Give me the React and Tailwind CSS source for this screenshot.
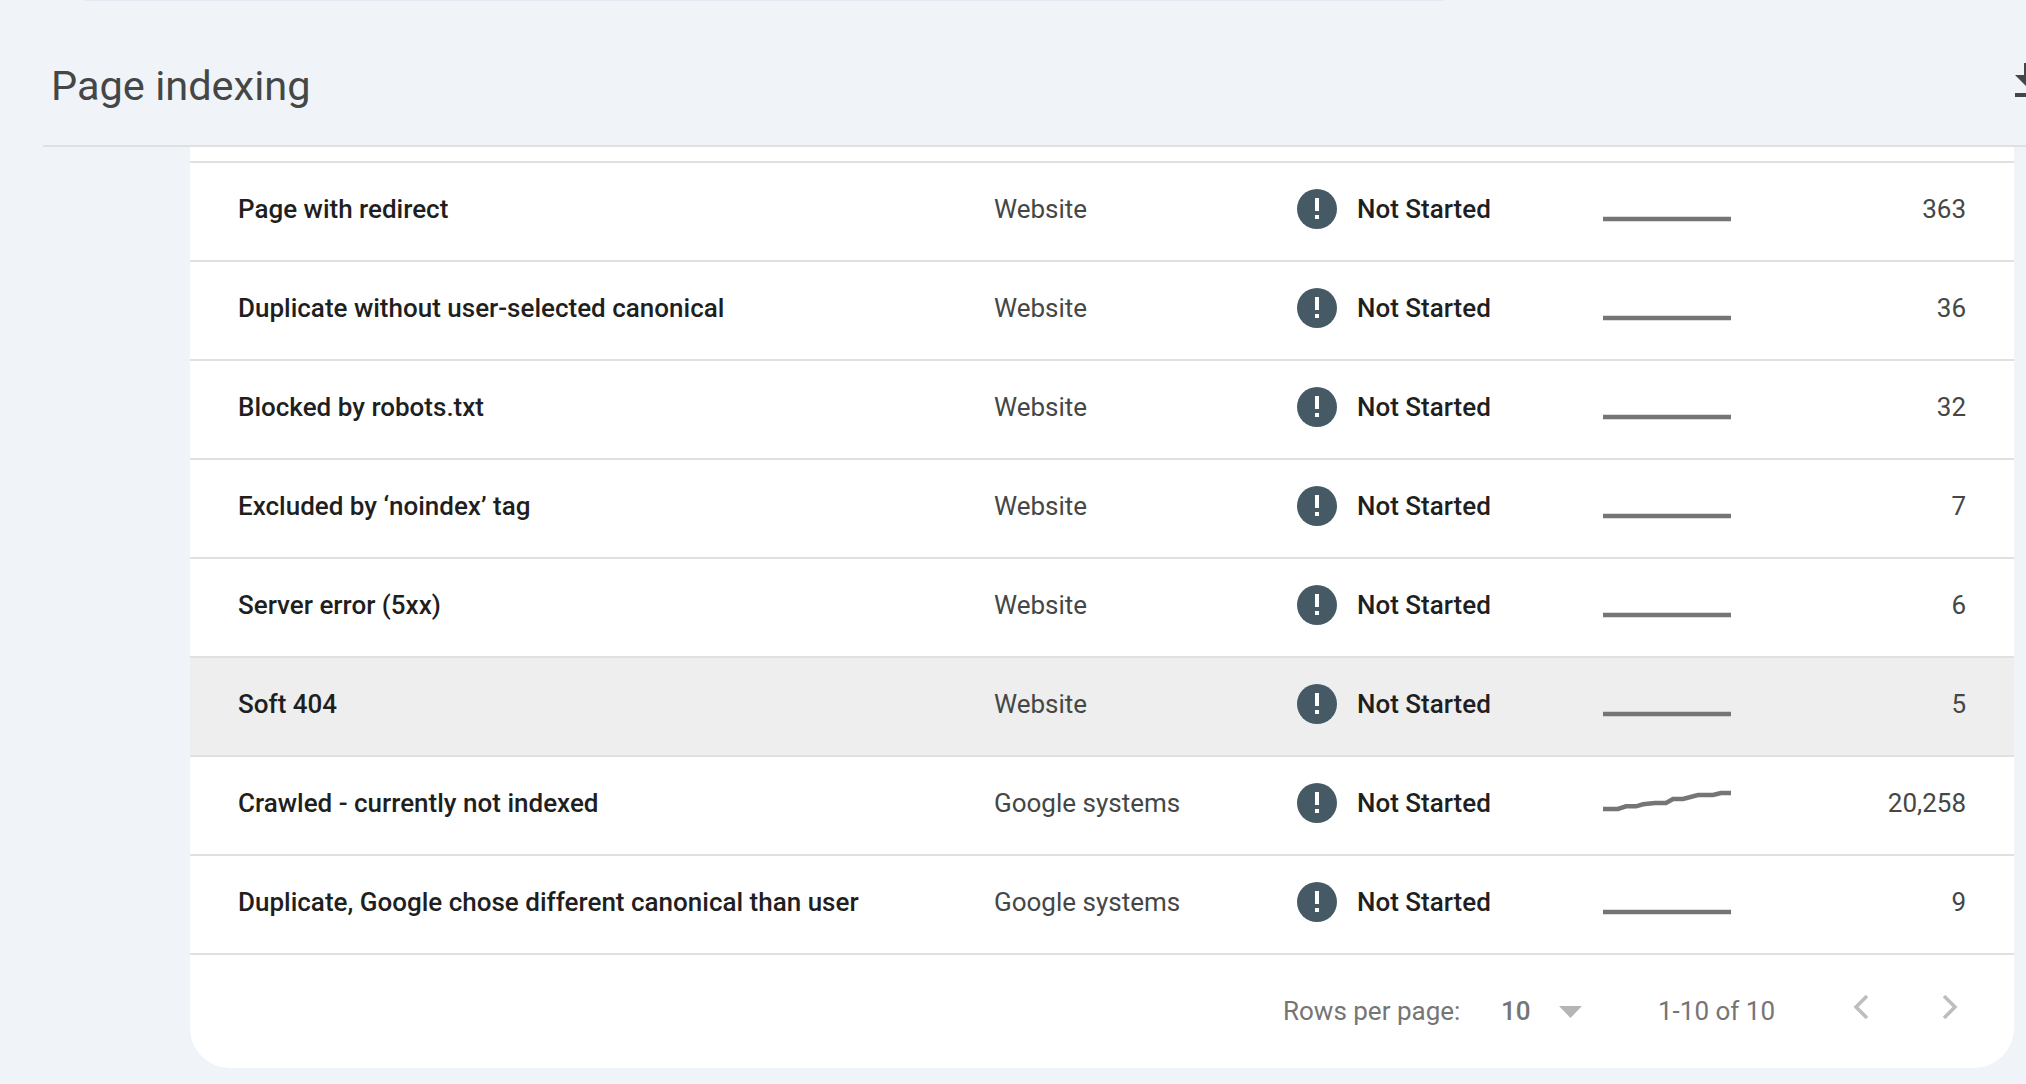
const rows = [
  { name: "Page with redirect", source: "Website", count: "363" },
  { name: "Duplicate without user-selected canonical", source: "Website", count: "36" },
  { name: "Blocked by robots.txt", source: "Website", count: "32" },
  { name: "Excluded by ‘noindex’ tag", source: "Website", count: "7" },
  { name: "Server error (5xx)", source: "Website", count: "6" },
  { name: "Soft 404", source: "Website", count: "5", hovered: true },
  { name: "Crawled - currently not indexed", source: "Google systems", count: "20,258", trend: true },
  { name: "Duplicate, Google chose different canonical than user", source: "Google systems", count: "9" },
];

function ErrorIcon() {
  return (
    <svg width="40" height="40" viewBox="0 0 40 40" className="shrink-0">
      <circle cx="20" cy="20" r="20" fill="#455a64" />
      <rect x="18" y="9" width="4" height="13" fill="#fff" />
      <rect x="18" y="26" width="4" height="4" fill="#fff" />
    </svg>
  );
}

function Spark({ trend }) {
  const points = trend
    ? "0,26 15,26 23,23.3 33,23.3 40,21.3 52,20 63,20 70,16 80,16 95,12 110,12 118,10 128,10"
    : "0,30 128,30";
  return (
    <svg width="128" height="40" viewBox="0 0 128 40" className="shrink-0">
      <polyline points={points} fill="none" stroke="#757575" strokeWidth="4.5" />
    </svg>
  );
}

function Row({ row }) {
  return (
    <div
      className={`flex h-[99px] items-center border-b-2 border-[#e0e0e0] pb-[5px] pl-12 pr-[48px] text-[26px] text-[#1f1f1f] ${
        row.hovered ? "bg-[#eeeeee]" : ""
      }`}
    >
      <div className="w-[756px] shrink-0 font-medium">{row.name}</div>
      <div className="w-[303px] shrink-0 text-[#444746]">{row.source}</div>
      <div className="flex w-[306px] shrink-0 items-center gap-[20px]">
        <ErrorIcon />
        <span className="font-medium">Not Started</span>
      </div>
      <Spark trend={row.trend} />
      <div className="flex-1 text-right text-[#444746]">{row.count}</div>
    </div>
  );
}

export default function App() {
  return (
    <div className="h-[1084px] w-[2026px] overflow-hidden bg-[#f0f4f9] font-['Roboto',sans-serif]">
      <div className="ml-[85px] h-px w-[1358px] bg-[#e3e9f3]" />
      <div className="ml-[43px] flex h-[146px] items-center justify-between overflow-hidden border-b-2 border-[#e0e0e0] pl-2">
        <h1 className="mt-[26px] text-[41.500px] font-[450] text-[#444746]">Page indexing</h1>
        <svg width="24" height="40" viewBox="0 0 24 40" className="mr-[-13px] mt-[20px] shrink-0">
          <path d="M9 0h6v12h9L12 24 0 12h9z" fill="#444746" />
          <rect x="0" y="30" width="24" height="4" fill="#444746" />
        </svg>
      </div>
      <div className="ml-[190px] mr-3 overflow-hidden rounded-b-[40px] bg-white">
        <div className="h-[16px] border-b-2 border-[#e0e0e0]" />
        {rows.map((row) => (
          <Row key={row.name} row={row} />
        ))}
        <div className="flex h-[113px] items-center pl-[1093px] text-[26px] text-[#757575]">
          <span className="w-[218px]">Rows per page:</span>
          <span className="w-[58px] font-medium">10</span>
          <svg width="23" height="12" viewBox="0 0 23 12" className="shrink-0">
            <path d="M0 0h23L11.500 12z" fill="#b5b5b5" />
          </svg>
          <span className="ml-[76px] w-[195px]">1-10 of 10</span>
          <svg width="16" height="24" viewBox="0 0 16 24" className="mt-[-10px] shrink-0">
            <path d="M14 1 3 12l11 11" fill="none" stroke="#bdbdbd" strokeWidth="3.5" />
          </svg>
          <svg width="16" height="24" viewBox="0 0 16 24" className="ml-[73px] mt-[-10px] shrink-0">
            <path d="M2 1l11 11L2 23" fill="none" stroke="#bdbdbd" strokeWidth="3.5" />
          </svg>
        </div>
      </div>
    </div>
  );
}
